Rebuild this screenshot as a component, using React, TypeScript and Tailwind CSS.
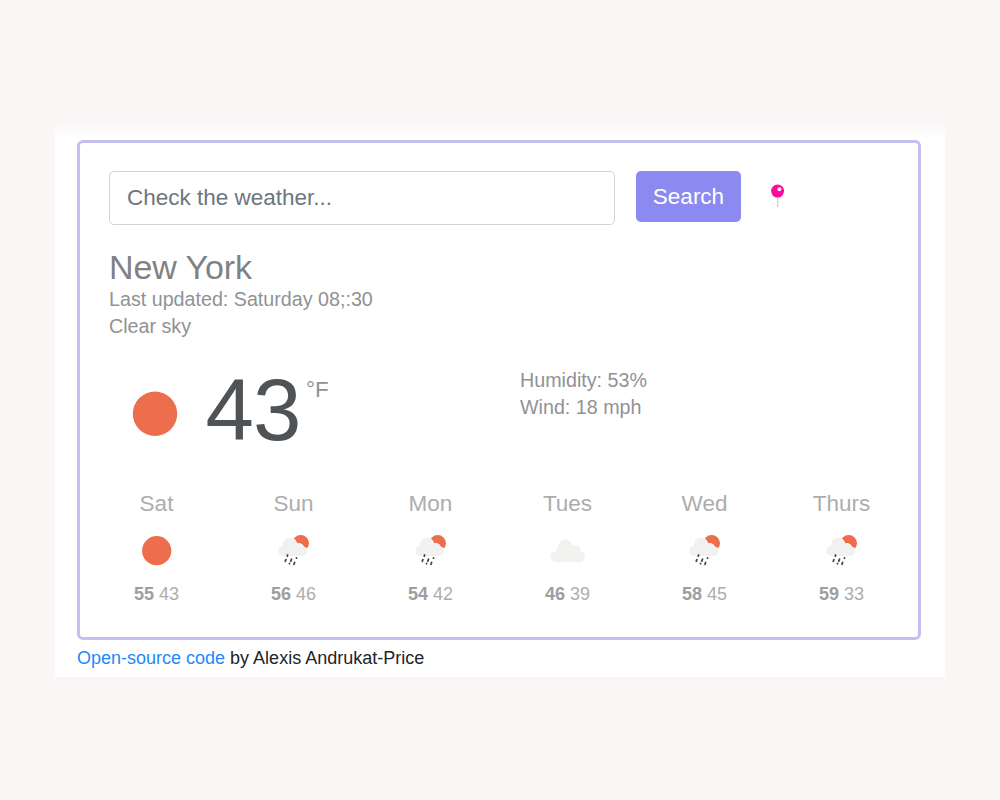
import React from "react";

type Kind = "sun" | "rain" | "cloud";

const days: { name: string; kind: Kind; hi: number; lo: number }[] = [
  { name: "Sat", kind: "sun", hi: 55, lo: 43 },
  { name: "Sun", kind: "rain", hi: 56, lo: 46 },
  { name: "Mon", kind: "rain", hi: 54, lo: 42 },
  { name: "Tues", kind: "cloud", hi: 46, lo: 39 },
  { name: "Wed", kind: "rain", hi: 58, lo: 45 },
  { name: "Thurs", kind: "rain", hi: 59, lo: 33 },
];

function Pin() {
  return (
    <svg width="16" height="26" viewBox="0 0 16 26" className="ml-[29px] mt-[12px]">
      <rect x="6.9" y="13" width="1.5" height="11" fill="#d3d3d5" />
      <circle cx="7.6" cy="8.1" r="6.5" fill="#ff0a9b" />
      <circle cx="9.4" cy="6.2" r="2" fill="#ffe3f4" />
    </svg>
  );
}

function WeatherIcon({ kind }: { kind: Kind }) {
  return (
    <svg width="44" height="44" viewBox="0 0 44 44" className="block">
      {kind === "sun" && <circle cx="21.7" cy="21.7" r="14.6" fill="#ec6e4c" />}
      {kind === "cloud" && (
        <g fill="#f2f2f0">
          <circle cx="10" cy="27.7" r="5.5" />
          <circle cx="19.3" cy="18.3" r="7.5" />
          <circle cx="29.7" cy="20.8" r="4.8" />
          <circle cx="33.6" cy="27.7" r="5.5" />
          <rect x="10" y="20" width="23.6" height="13.2" />
        </g>
      )}
      {kind === "rain" && (
        <>
          <circle cx="28.7" cy="14.3" r="8.3" fill="#ec6e4c" />
          <circle cx="26.8" cy="19.2" r="5.3" fill="#fff" />
          <circle cx="31" cy="22.6" r="5.2" fill="#fff" />
          <circle cx="18" cy="15.8" r="7.3" fill="#fff" />
          <g fill="#f1f1f1">
            <circle cx="11.4" cy="21.9" r="5.1" />
            <circle cx="18" cy="15.8" r="7" />
            <circle cx="26.5" cy="19.2" r="4.8" />
            <circle cx="30.6" cy="22.6" r="4.4" />
            <rect x="11.4" y="18" width="19.2" height="9" />
          </g>
          <path
            d="M15.6 26l-.3 1.2M13.9 30.6l-.6 1.7M19.5 30.2l-.7 1.9M17.5 34.5l.1 .2M24.5 29l0 .2M22.6 33.4l-.6 1.9"
            stroke="#484848"
            strokeWidth="1.8"
            strokeLinecap="round"
          />
        </>
      )}
    </svg>
  );
}

export default function App() {
  return (
    <div className="h-[800px] w-[1000px] bg-[#faf6f5] pt-[123px] pl-[55px] font-['Liberation_Sans',Arial,sans-serif]">
      <div className="h-[554px] w-[890px] bg-[linear-gradient(to_bottom,#faf8f8_0px,#ffffff_17px)] pt-[17px] pl-[22px]">
        <div className="h-[500px] w-[844px] rounded-[6px] border-[3px] border-[#c1c0f0] bg-white pt-[28px] pl-[29px]">
          <div className="flex h-[54px] items-start">
            <input
              aria-label="City"
              placeholder="Check the weather..."
              className="h-[54px] w-[506px] rounded-[5px] border border-[#ced4da] pl-[17px] text-[22.5px] text-[#6c757d] outline-none placeholder:text-[#6c757d]"
            />
            <button className="ml-[21px] h-[51px] w-[105px] rounded-[5px] bg-[#8c8af0] text-[22.5px] text-white">
              Search
            </button>
            <Pin />
          </div>
          <h1 className="mt-[22px] text-[34px] leading-[40px] tracking-[-0.1px] text-[#808285]">New York</h1>
          <div className="-mt-px text-[19.7px] leading-[27px] whitespace-nowrap text-[#909294]">
            <div>Last updated: Saturday 08;:30</div>
            <div>Clear sky</div>
          </div>
          <div className="mt-[27px] flex h-[110px]">
            <svg width="46" height="46" viewBox="0 0 46 46" className="mt-[24px] ml-[22.5px]">
              <circle cx="23" cy="22.8" r="22.2" fill="#ec6e4c" />
            </svg>
            <div className="ml-[28px] w-[100px] text-[87px] leading-[86px] tracking-[-1px] text-[#4f5356]">
              43
            </div>
            <div className="mt-[9px] w-[214.5px] pl-[0.5px] text-[22.5px] leading-[27px] text-[#909294]">°F</div>
            <div className="text-[19.7px] leading-[27px] whitespace-nowrap text-[#909294]">
              <div>Humidity: 53%</div>
              <div>Wind: 18 mph</div>
            </div>
          </div>
          <div className="-ml-[21px] mt-[13px] flex">
            {days.map((d) => (
              <div key={d.name} className="flex w-[137px] shrink-0 flex-col items-center">
                <div className="text-[22.5px] leading-[27px] text-[#adadad]">{d.name}</div>
                <div className="mt-[12px]">
                  <WeatherIcon kind={d.kind} />
                </div>
                <div className="mt-[8px] text-[18px] leading-[27px] text-[#adadad]">
                  <span className="font-bold text-[#9e9e9e]">{d.hi}</span> {d.lo}
                </div>
              </div>
            ))}
          </div>
        </div>
        <div className="mt-[5px] text-[18px] leading-[27px] whitespace-nowrap text-[#212529]">
          <a className="text-[#2388fb]">Open-source code</a> by Alexis Andrukat-Price
        </div>
      </div>
    </div>
  );
}
